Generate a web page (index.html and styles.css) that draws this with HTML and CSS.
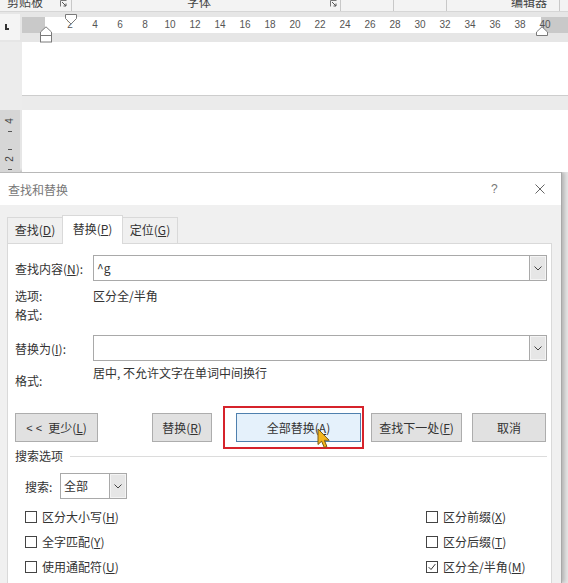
FILE: index.html
```html
<!DOCTYPE html>
<html lang="zh-CN">
<head>
<meta charset="utf-8">
<title>查找和替换</title>
<link rel="stylesheet" href="styles.css">
</head>
<body>
<div class="ribbon">
  <div class="grp g1"><span class="glabel">剪贴板</span><svg class="launch" viewBox="0 0 7 7"><path d="M0.5 6.5V0.5H6.5" fill="none" stroke="#777"/><path d="M2 2L6 6M3.5 6H6V3.5" fill="none" stroke="#555"/></svg></div>
  <div class="grp g2"><span class="glabel">字体</span><svg class="launch" viewBox="0 0 7 7"><path d="M0.5 6.5V0.5H6.5" fill="none" stroke="#777"/><path d="M2 2L6 6M3.5 6H6V3.5" fill="none" stroke="#555"/></svg></div>
  <div class="grp g3"></div>
  <div class="grp g4"></div>
  <div class="grp g5"><span class="glabel">编辑器</span></div>
  <div class="grp g6"></div>
</div>

<div class="rulerbar">
  <div class="tabsel"><span class="lmark"></span></div>
  <div class="ruler">
    <span>2</span><span>4</span><span>6</span><span>8</span><span>10</span><span>12</span><span>14</span><span>16</span><span>18</span><span>20</span><span>22</span><span>24</span><span>26</span><span>28</span><span>30</span><span>32</span><span>34</span><span>36</span><span>38</span><span>40</span>
    <svg class="mk mk-first" viewBox="0 0 12 11"><path d="M0.5 0.5H11.5V4.5L6 10L0.5 4.5Z" fill="#fff" stroke="#7a7a7a"/></svg>
    <svg class="mk mk-hang" viewBox="0 0 12 17"><path d="M6 0.8L11.5 6V9.5H0.5V6Z" fill="#fff" stroke="#7a7a7a"/><rect x="0.5" y="9.5" width="11" height="6.5" fill="#fff" stroke="#7a7a7a"/></svg>
    <svg class="mk mk-right" viewBox="0 0 12 10"><path d="M6 0.8L11.5 6V9.5H0.5V6Z" fill="#fff" stroke="#7a7a7a"/></svg>
  </div>
</div>

<div class="doc">
  <div class="lcol"></div>
  <div class="page"></div>
  <div class="lcol"></div>
  <div class="pagegap"></div>
  <div class="vruler">
    <span class="vnum">4</span>
    <span class="vtick t1"></span>
    <span class="vtick t2"></span>
    <span class="vnum n2">2</span>
    <span class="vtick t3"></span>
  </div>
  <div class="page"></div>
</div>

<div class="dialog">
  <div class="titlebar">
    <span class="dtitle">查找和替换</span>
    <span class="help">?</span>
    <svg class="close" viewBox="0 0 10 10"><path d="M0.5 0.5L9.5 9.5M9.5 0.5L0.5 9.5" stroke="#666" stroke-width="1" fill="none"/></svg>
  </div>
  <div class="dbody">
    <div class="tabs">
      <div class="tab t-find">查找(<u>D</u>)</div>
      <div class="tab t-rep active">替换(<u>P</u>)</div>
      <div class="tab t-goto">定位(<u>G</u>)</div>
    </div>
    <div class="panel">
      <div class="frow">
        <span class="flabel">查找内容(<u>N</u>):</span>
        <div class="combo"><span class="val">^g</span><span class="dd"><svg viewBox="0 0 8 5"><path d="M0.5 0.5L4 4L7.5 0.5" fill="none" stroke="#444"/></svg></span></div>
      </div>
      <div class="irow r-opt"><span class="flabel">选项:</span><span>区分全/半角</span></div>
      <div class="irow"><span class="flabel">格式:</span></div>
      <div class="frow">
        <span class="flabel">替换为(<u>I</u>):</span>
        <div class="combo"><span class="val"></span><span class="dd"><svg viewBox="0 0 8 5"><path d="M0.5 0.5L4 4L7.5 0.5" fill="none" stroke="#444"/></svg></span></div>
      </div>
      <div class="irow fmt2"><span class="flabel lowlabel">格式:</span><span>居中, 不允许文字在单词中间换行</span></div>

      <div class="btnrow">
        <div class="btn b-less"><span class="lt">&lt; &lt;</span>更少(<u>L</u>)</div>
        <div class="btn b-rep">替换(<u>R</u>)</div>
        <div class="hl">
          <div class="btn b-all">全部替换(<u>A</u>)</div>
          <svg class="cursor" viewBox="0 0 14 21"><path d="M1 1V16.5L4.6 13.2L7.3 19.5L9.9 18.4L7.3 12.3H12.2Z" fill="#f3b51c" stroke="#7a5a10" stroke-width="1" stroke-linejoin="round"/></svg>
        </div>
        <div class="btn b-next">查找下一处(<u>F</u>)</div>
        <div class="btn b-cancel">取消</div>
      </div>

      <div class="sechead"><span>搜索选项</span><span class="secline"></span></div>

      <div class="srow">
        <span class="slabel">搜索:</span>
        <div class="combo small"><span class="val">全部</span><span class="dd"><svg viewBox="0 0 8 5"><path d="M0.5 0.5L4 4L7.5 0.5" fill="none" stroke="#444"/></svg></span></div>
      </div>

      <div class="opts">
        <label class="opt"><span class="cb"></span>区分大小写(<u>H</u>)</label>
        <label class="opt"><span class="cb"></span>区分前缀(<u>X</u>)</label>
        <label class="opt"><span class="cb"></span>全字匹配(<u>Y</u>)</label>
        <label class="opt"><span class="cb"></span>区分后缀(<u>T</u>)</label>
        <label class="opt"><span class="cb"></span>使用通配符(<u>U</u>)</label>
        <label class="opt"><span class="cb checked"><svg viewBox="0 0 12 12"><path d="M2 6.2L4.8 9L10 2.5" fill="none" stroke="#333" stroke-width="1.2"/></svg></span>区分全/半角(<u>M</u>)</label>
      </div>
    </div>
  </div>
</div>
</body>
</html>
```

FILE: styles.css
```css
* { box-sizing: border-box; }
html, body { margin: 0; padding: 0; }
body {
  width: 568px;
  height: 583px;
  overflow: hidden;
  background: #e6e6e6;
  font-family: "Noto Sans CJK SC", "Microsoft YaHei", sans-serif;
  font-size: 12px;
  color: #333;
}
u { text-decoration: underline; text-underline-offset: 1px; }

/* ribbon strip */
.ribbon { height: 11px; background: #f3f3f3; display: flex; overflow: hidden; }
.grp { height: 11px; display: flex; align-items: flex-start; border-right: 1px solid #c8c8c8; }
.g1 { width: 72px; padding-left: 7px; }
.g2 { width: 269px; padding-left: 115px; }
.g3, .g4 { width: 53px; }
.g5 { width: 113px; padding-left: 64px; }
.g6 { flex: 1; border-right: none; }
.glabel { line-height: 12px; margin-top: -4px; color: #444; white-space: nowrap; }
.launch { width: 7px; height: 7px; margin-left: auto; margin-right: 4px; }
.g2 .launch { margin-right: 3px; }

/* horizontal ruler */
.rulerbar { height: 31px; border-top: 1px solid #d6d6d6; background: #e6e6e6; display: flex; }
.tabsel { width: 20px; height: 26px; margin-top: 2px; background: #f4f4f4; display: flex; padding: 10px 0 0 5px; }
.lmark { width: 4px; height: 6px; border-left: 2px solid #333; border-bottom: 2px solid #333; }
.ruler {
  position: relative;
  flex: 1;
  margin: 5px 0 0 2px;
  height: 16px;
  display: flex;
  padding-left: 35.5px;
  background: linear-gradient(to right, #c9c9c9 0 23px, #fff 23px 519px, #c9c9c9 519px);
}
.ruler span {
  flex: none;
  width: 25px;
  text-align: center;
  font: 10px/16px "Liberation Sans", Arial, sans-serif;
  color: #555;
}
.mk { position: absolute; }
.mk-first { left: 43px; top: -3px; width: 12px; height: 11px; }
.mk-hang { left: 18px; top: 9px; width: 12px; height: 17px; }
.mk-right { left: 514px; top: 9px; width: 12px; height: 10px; }

/* document area */
.doc { height: 130px; display: grid; grid-template-columns: 22px 1fr; grid-template-rows: 53px 15px 62px; }
.lcol { background: #ececec; }
.page { background: #fff; }
.pagegap { background: #ebebeb; border-top: 1px solid #cdcdcd; }
.vruler {
  grid-row: 3;
  width: 20px;
  background: #d6d6d6;
  display: flex;
  flex-direction: column;
  align-items: center;
  padding-top: 7px;
}
.vnum { font: 10px/8px "Liberation Sans", Arial, sans-serif; color: #444; transform: rotate(-90deg); width: 8px; height: 8px; text-align: center; }
.vtick { width: 4px; height: 1px; background: #555; }
.t1 { margin-top: 6px; }
.t2 { margin-top: 17px; }
.n2 { margin-top: 5px; }
.t3 { margin-top: 6px; }

/* dialog */
.dialog {
  width: 562px;
  height: 411px;
  background: #f0f0f0;
  border-top: 1px solid #b8b8b8;
  border-right: 1px solid #a8a8a8;
  box-shadow: 3px 0 4px rgba(0,0,0,0.18), 0 -1px 3px rgba(0,0,0,0.08);
  display: flex;
  flex-direction: column;
}
.titlebar { height: 32px; background: #fff; display: flex; align-items: center; flex: none; }
.dtitle { padding-left: 8px; color: #777; }
.help { margin-left: auto; color: #777; font-family: "Liberation Sans", Arial, sans-serif; font-size: 12px; width: 7px; }
.close { width: 10px; height: 10px; margin-left: 37px; margin-right: 16px; }
.dbody { flex: 1; padding: 10px 9px 0 7px; display: flex; flex-direction: column; }

.tabs { height: 28px; display: flex; align-items: flex-end; }
.tab {
  height: 26px;
  line-height: 24px;
  text-align: center;
  border: 1px solid #d9d9d9;
  border-bottom: none;
  background: #f0f0f0;
}
.t-find { width: 56px; }
.t-rep { width: 61px; margin-left: -1px; }
.t-goto { width: 56px; margin-left: -1px; }
.tab.active { height: 29px; margin-bottom: -1px; background: #fff; position: relative; z-index: 1; line-height: 26px; }

.panel { flex: 1; background: #fff; border: 1px solid #d9d9d9; border-bottom: none; padding: 0 4px 0 7px; }

.frow { display: flex; align-items: center; margin-top: 11px; }
.flabel { width: 78px; flex: none; }
.combo { flex: 1; height: 26px; border: 1px solid #a9a9a9; display: flex; background: #fff; }
.combo .val { flex: 1; padding-left: 3px; line-height: 23px; }
.combo .dd {
  width: 17px;
  background: #e6e6e6;
  border-left: 1px solid #a9a9a9;
  box-shadow: inset 0 0 0 1px #f4f4f4;
  display: flex;
  align-items: center;
  justify-content: center;
}
.combo .dd svg { width: 8px; height: 5px; }

.irow { display: flex; line-height: 19px; }
.r-opt { margin-top: 5px; }
.fmt2 { margin-top: 2px; height: 27px; }
.lowlabel { margin-top: 8px; }

.btnrow { display: flex; margin-top: 23px; height: 29px; }
.btn {
  height: 29px;
  border: 1px solid #adadad;
  background: #e1e1e1;
  display: flex;
  align-items: center;
  justify-content: center;
  white-space: nowrap;
}
.lt { font-family: "Liberation Sans", Arial, sans-serif; font-size: 11px; margin-right: 6px; }
.b-less { width: 83px; }
.b-rep { width: 60px; margin-left: 54px; }
.hl { position: relative; margin-left: 24px; }
.hl::after {
  content: "";
  position: absolute;
  top: -7px; left: -13px; right: -3px; bottom: -7px;
  border: 2px solid #d6232b;
}
.b-all { width: 125px; background: #e5f1fb; border-color: #4f80ae; }
.cursor { position: absolute; left: 81px; top: 15px; width: 14px; height: 21px; z-index: 2; }
.b-next { width: 91px; margin-left: 10px; }
.b-cancel { width: 74px; margin-left: 10px; }

.sechead { display: flex; align-items: center; line-height: 20px; margin-top: 4px; }
.secline { flex: 1; height: 1px; background: #dcdcdc; margin-left: 7px; }

.srow { display: flex; align-items: center; margin-top: 7px; padding-left: 10px; }
.slabel { width: 35px; }
.combo.small { flex: none; width: 67px; }

.opts { display: grid; grid-template-columns: 401px auto; grid-auto-rows: 25px; margin-top: 5px; padding-left: 10px; }
.opt { display: flex; align-items: center; white-space: nowrap; }
.cb { width: 12px; height: 12px; border: 1px solid #444; margin-right: 5px; background: #fff; display: flex; }
.cb svg { width: 10px; height: 10px; }
```
